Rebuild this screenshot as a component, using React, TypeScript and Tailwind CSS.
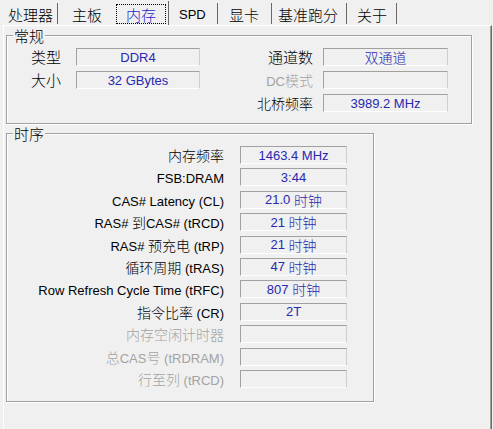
import React from "react";

const CJK_RE = /[\u3000-\u9fff\uff00-\uffef]+|[^\u3000-\u9fff\uff00-\uffef]+/g;

function Mixed({ text, cjkSize = 14 }: { text: string; cjkSize?: number }) {
  const parts = text.match(CJK_RE) || [];
  return (
    <>
      {parts.map((p, i) =>
        /[\u3000-\u9fff\uff00-\uffef]/.test(p) ? (
          <span
            key={i}
            className={
              cjkSize === 15
                ? "font-['Noto_Sans_CJK_SC',sans-serif] text-[15px] font-light leading-none"
                : "font-['Noto_Sans_CJK_SC',sans-serif] text-[14px] font-light leading-none"
            }
          >
            {p}
          </span>
        ) : (
          <span key={i} className="font-['Liberation_Sans',sans-serif] text-[13px] leading-none whitespace-pre">
            {p}
          </span>
        )
      )}
    </>
  );
}

function Field({ value, className }: { value?: string; className: string }) {
  return (
    <div
      className={`flex h-[18px] items-center justify-center border border-t-[#a0a0a0] border-l-[#a0a0a0] border-r-[#cfcfcf] border-b-white text-[#2828b0] ${className}`}
    >
      {value ? <Mixed text={value} /> : null}
    </div>
  );
}

function Group({ title, className, children }: { title: string; className: string; children: React.ReactNode }) {
  return (
    <div
      className={`relative border border-[#a0a0a0] shadow-[inset_1px_1px_0_#ffffff,1px_1px_0_#ffffff] ${className}`}
    >
      <div className="absolute left-[6px] top-[-8px] bg-[#f0f0f0] px-[1px] leading-none text-black">
        <Mixed text={title} cjkSize={15} />
      </div>
      {children}
    </div>
  );
}

const timings: { label: string; value?: string; disabled?: boolean }[] = [
  { label: "内存频率", value: "1463.4 MHz" },
  { label: "FSB:DRAM", value: "3:44" },
  { label: "CAS# Latency (CL)", value: "21.0 时钟" },
  { label: "RAS# 到CAS# (tRCD)", value: "21 时钟" },
  { label: "RAS# 预充电 (tRP)", value: "21 时钟" },
  { label: "循环周期 (tRAS)", value: "47 时钟" },
  { label: "Row Refresh Cycle Time (tRFC)", value: "807 时钟" },
  { label: "指令比率 (CR)", value: "2T" },
  { label: "内存空闲计时器", disabled: true },
  { label: "总CAS号 (tRDRAM)", disabled: true },
  { label: "行至列 (tRCD)", disabled: true },
];

export default function App() {
  return (
    <div className="h-[429px] w-[493px] overflow-hidden bg-[#f0f0f0] text-black select-none">
      {/* Tabs */}
      <div className="flex h-[25px] items-start pt-[3px]">
        <div className="flex h-[21px] w-[58px] items-center border-r border-r-[#696969] pl-[8px] pt-[1px]">
          <Mixed text="处理器" cjkSize={15} />
        </div>
        <div className="flex h-[21px] w-[54px] items-center pl-[14px] pt-[1px]">
          <Mixed text="主板" cjkSize={15} />
        </div>
        <div className="relative z-10 -mt-[2px] flex h-[24px] w-[57px] items-start border-r border-r-[#696969] pl-[4px] pt-[3px]">
          <div className="flex h-[20px] w-[50px] items-center justify-center border border-dotted border-black text-[#1e1ec8]">
            <Mixed text="内存" cjkSize={15} />
          </div>
        </div>
        <div className="flex h-[21px] w-[49px] items-center border-r border-r-[#696969] pl-[10px] pt-[1px]">
          <Mixed text="SPD" cjkSize={15} />
        </div>
        <div className="flex h-[21px] w-[54px] items-center border-r border-r-[#696969] pl-[11px] pt-[1px]">
          <Mixed text="显卡" cjkSize={15} />
        </div>
        <div className="flex h-[21px] w-[75px] items-center border-r border-r-[#696969] pl-[6px] pt-[1px]">
          <Mixed text="基准跑分" cjkSize={15} />
        </div>
        <div className="flex h-[21px] w-[50px] items-center border-r border-r-[#696969] pl-[10px] pt-[1px]">
          <Mixed text="关于" cjkSize={15} />
        </div>
      </div>

      {/* Panel */}
      <div className="ml-[3px] h-[404px] w-[489px] border-l border-r border-t border-l-white border-r-[#696969] border-t-white shadow-[inset_-1px_0_0_#a0a0a0]">
        <Group title="常规" className="ml-[2px] mt-[9px] h-[89px] w-[466px]">
          <div className="flex pt-[12px]">
            <div className="flex flex-col gap-[5px]">
              <div className="flex h-[18px] items-center">
                <div className="w-[54px] text-right">
                  <Mixed text="类型" cjkSize={15} />
                </div>
                <Field value="DDR4" className="ml-[15px] w-[124px]" />
              </div>
              <div className="flex h-[18px] items-center">
                <div className="w-[54px] text-right">
                  <Mixed text="大小" cjkSize={15} />
                </div>
                <Field value="32 GBytes" className="ml-[15px] w-[124px]" />
              </div>
            </div>
            <div className="ml-[43px] flex flex-col gap-[5px]">
              <div className="flex h-[18px] items-center">
                <div className="w-[70px] text-right">
                  <Mixed text="通道数" cjkSize={15} />
                </div>
                <Field value="双通道" className="ml-[10px] w-[125px]" />
              </div>
              <div className="flex h-[18px] items-center">
                <div className="w-[70px] text-right text-[#a3a3a3]">
                  <Mixed text="DC模式" />
                </div>
                <Field className="ml-[10px] w-[125px]" />
              </div>
              <div className="flex h-[18px] items-center">
                <div className="w-[70px] text-right">
                  <Mixed text="北桥频率" />
                </div>
                <Field value="3989.2 MHz" className="ml-[10px] w-[125px]" />
              </div>
            </div>
          </div>
        </Group>

        <Group title="时序" className="ml-[2px] mt-[9px] h-[269px] w-[368px]">
          <div className="flex flex-col gap-[4.4px] pt-[12px]">
            {timings.map((t) => (
              <div key={t.label} className="flex h-[18px] items-center">
                <div className={t.disabled ? "w-[217px] text-right text-[#a3a3a3]" : "w-[217px] text-right text-black"}>
                  <Mixed text={t.label} />
                </div>
                <Field value={t.value} className="ml-[16px] w-[107px]" />
              </div>
            ))}
          </div>
        </Group>
      </div>
    </div>
  );
}
